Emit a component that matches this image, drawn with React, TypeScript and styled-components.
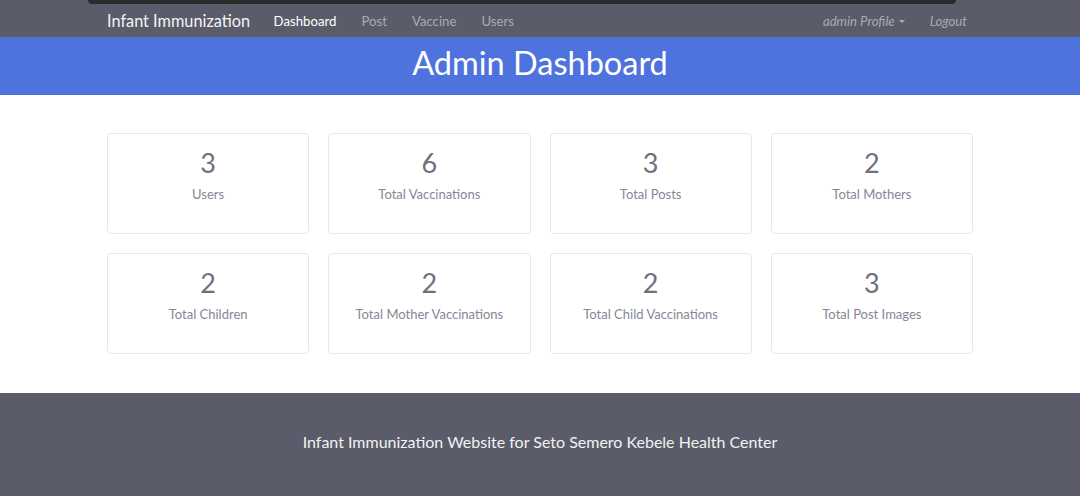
import { createGlobalStyle, styled } from "styled-components";

const GlobalStyle = createGlobalStyle`
  html, body {
    margin: 0;
    padding: 0;
    background: #fff;
    font-family: Lato, "Open Sans", sans-serif;
  }
`;

const Page = styled.div`
  position: relative;
  display: flex;
  flex-direction: column;
  min-height: 496px;
`;

// dark strip across the top of the screenshot (window edge)
const TopEdge = styled.div`
  position: absolute;
  top: 0;
  left: 88px;
  width: 868px;
  height: 4px;
  background: #2b2b2e;
  border-radius: 0 0 4px 4px;
`;

const NavBar = styled.nav`
  height: 37px;
  background-color: #5a5c69;
  display: flex;
  justify-content: center;
`;

const NavInner = styled.div`
  width: 866px;
  display: flex;
  align-items: center;
  padding-top: 4px;
`;

const Brand = styled.span`
  color: #f4f4f6;
  font-size: 16.3px;
  margin-right: 11px;
`;

const NavLink = styled.span<{ $active?: boolean; $italic?: boolean }>`
  color: ${(p) => (p.$active ? "#fff" : "#a9abb4")};
  font-size: 13.2px;
  padding: 0 12.5px;
  font-style: ${(p) => (p.$italic ? "italic" : "normal")};
  display: flex;
  align-items: center;
  gap: 4px;
  &:last-child {
    padding-right: 6px;
  }
`;

const Spacer = styled.div`
  flex: 1;
`;

const Caret = styled.span`
  width: 0;
  height: 0;
  border-left: 3px solid transparent;
  border-right: 3px solid transparent;
  border-top: 3px solid #a9abb4;
  margin-top: 1px;
`;

const Banner = styled.header`
  height: 58px;
  box-sizing: border-box;
  padding-bottom: 8px;
  background-color: #4e73df;
  display: flex;
  align-items: center;
  justify-content: center;
`;

const Title = styled.h1`
  margin: 0;
  color: #fff;
  font-weight: 400;
  font-size: 32.5px;
`;

const Main = styled.main`
  padding: 38px 0 39px;
  display: flex;
  justify-content: center;
`;

const Grid = styled.div`
  width: 866px;
  display: grid;
  grid-template-columns: repeat(4, 1fr);
  gap: 19px;
`;

const Card = styled.div`
  height: 101px;
  box-sizing: border-box;
  border: 1px solid #e6e7ea;
  border-radius: 4px;
  display: flex;
  flex-direction: column;
  align-items: center;
  padding-top: 13px;
`;

const Count = styled.div`
  color: #6e707e;
  font-size: 27px;
  line-height: 32px;
`;

const Label = styled.div`
  color: #858796;
  font-size: 13px;
  margin-top: 7px;
`;

const Footer = styled.footer`
  flex: 1;
  background-color: #5a5c69;
  display: flex;
  justify-content: center;
  padding-top: 39px;
  min-height: 103px;
  box-sizing: border-box;
`;

const FooterText = styled.p`
  margin: 0;
  color: #f2f2f4;
  font-size: 16px;
`;

const stats = [
  { count: 3, label: "Users" },
  { count: 6, label: "Total Vaccinations" },
  { count: 3, label: "Total Posts" },
  { count: 2, label: "Total Mothers" },
  { count: 2, label: "Total Children" },
  { count: 2, label: "Total Mother Vaccinations" },
  { count: 2, label: "Total Child Vaccinations" },
  { count: 3, label: "Total Post Images" },
];

export default function App() {
  return (
    <Page>
      <GlobalStyle />
      <NavBar>
        <NavInner>
          <Brand>Infant Immunization</Brand>
          <NavLink $active>Dashboard</NavLink>
          <NavLink>Post</NavLink>
          <NavLink>Vaccine</NavLink>
          <NavLink>Users</NavLink>
          <Spacer />
          <NavLink $italic>
            admin Profile <Caret />
          </NavLink>
          <NavLink $italic>Logout</NavLink>
        </NavInner>
      </NavBar>
      <Banner>
        <Title>Admin Dashboard</Title>
      </Banner>
      <Main>
        <Grid>
          {stats.map((s) => (
            <Card key={s.label}>
              <Count>{s.count}</Count>
              <Label>{s.label}</Label>
            </Card>
          ))}
        </Grid>
      </Main>
      <Footer>
        <FooterText>
          Infant Immunization Website for Seto Semero Kebele Health Center
        </FooterText>
      </Footer>
      <TopEdge />
    </Page>
  );
}
